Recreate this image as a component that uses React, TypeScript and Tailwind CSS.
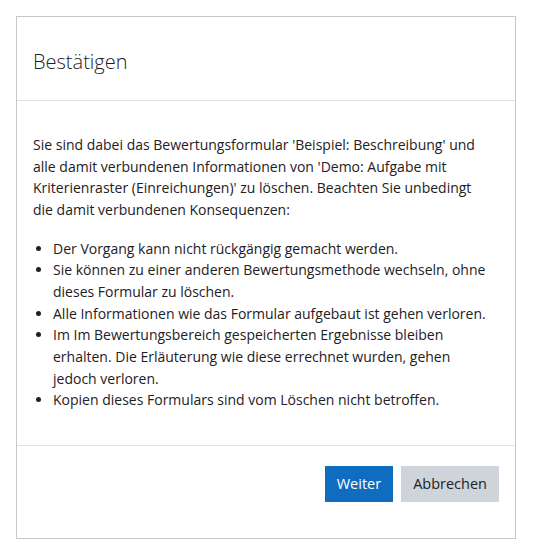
const font = { fontFamily: '"Open Sans", "Noto Sans", sans-serif' }

export default function App() {
  return (
    <div className="min-h-screen bg-white p-4" style={font}>
      <div className="flex h-[523px] w-[500px] flex-col border border-[#c8c8c8] bg-white text-[#1d2125]">
        {/* Header */}
        <div className="flex h-[84px] shrink-0 items-center border-b border-[#dee2e6] px-4">
          <h5 className="pt-[6px] text-[20px] font-light leading-tight">Bestätigen</h5>
        </div>

        {/* Body */}
        <div className="flex-1 pl-4 pr-6 pt-[33px] text-[14px] leading-[21.67px]">
          <p className="mb-[17px]">
            Sie sind dabei das Bewertungsformular 'Beispiel: Beschreibung' und alle damit verbundenen
            Informationen von 'Demo: Aufgabe mit Kriterienraster (Einreichungen)' zu löschen. Beachten Sie
            unbedingt die damit verbundenen Konsequenzen:
          </p>
          <ul className="list-disc pl-5">
            <li>Der Vorgang kann nicht rückgängig gemacht werden.</li>
            <li>Sie können zu einer anderen Bewertungsmethode wechseln, ohne dieses Formular zu löschen.</li>
            <li>Alle Informationen wie das Formular aufgebaut ist gehen verloren.</li>
            <li>
              Im Im Bewertungsbereich gespeicherten Ergebnisse bleiben erhalten. Die Erläuterung wie diese
              errechnet wurden, gehen jedoch verloren.
            </li>
            <li>Kopien dieses Formulars sind vom Löschen nicht betroffen.</li>
          </ul>
        </div>

        {/* Footer */}
        <div className="flex h-[93px] shrink-0 items-start justify-end gap-2 border-t border-[#dee2e6] px-4 pt-5">
          <button className="h-9 bg-[#0f6cbf] px-3 text-[14.5px] text-white">Weiter</button>
          <button className="h-9 bg-[#ced4da] px-3 text-[14.5px] text-[#1d2125]">Abbrechen</button>
        </div>
      </div>
    </div>
  )
}
